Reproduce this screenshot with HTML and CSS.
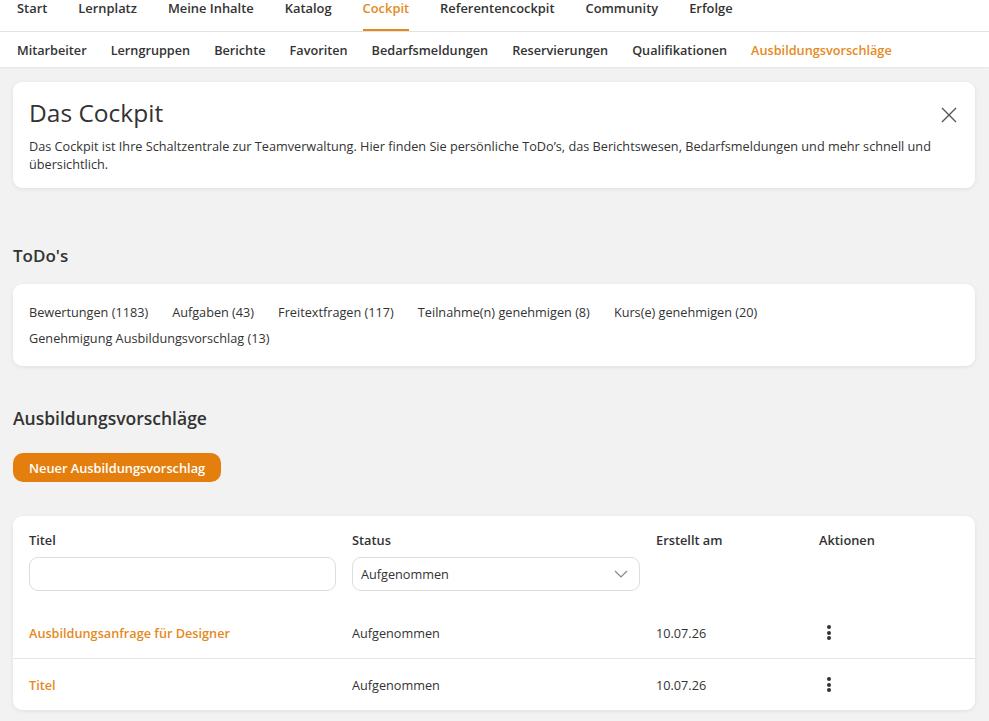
FILE: index.html
```html
<!DOCTYPE html>
<html lang="de">
<head>
  <meta charset="UTF-8">
  <title>Cockpit – Ausbildungsvorschläge</title>
  <link rel="stylesheet" href="styles.css">
</head>
<body>
  <nav class="main-nav">
    <a href="#">Start</a>
    <a href="#">Lernplatz</a>
    <a href="#">Meine Inhalte</a>
    <a href="#">Katalog</a>
    <a href="#" class="active">Cockpit</a>
    <a href="#">Referentencockpit</a>
    <a href="#">Community</a>
    <a href="#">Erfolge</a>
  </nav>
  <nav class="sub-nav">
    <a href="#">Mitarbeiter</a>
    <a href="#">Lerngruppen</a>
    <a href="#">Berichte</a>
    <a href="#">Favoriten</a>
    <a href="#">Bedarfsmeldungen</a>
    <a href="#">Reservierungen</a>
    <a href="#">Qualifikationen</a>
    <a href="#" class="active">Ausbildungsvorschläge</a>
  </nav>

  <main class="content">
    <section class="card intro">
      <div class="intro-head">
        <h1>Das Cockpit</h1>
        <button class="close" aria-label="Schließen">
          <svg width="16" height="16" viewBox="0 0 16 16"><path d="M1 1L15 15M15 1L1 15" stroke="#555" stroke-width="1.4" fill="none"/></svg>
        </button>
      </div>
      <p>Das Cockpit ist Ihre Schaltzentrale zur Teamverwaltung. Hier finden Sie persönliche ToDo’s, das Berichtswesen, Bedarfsmeldungen und mehr schnell und übersichtlich.</p>
    </section>

    <h2 class="todo-title">ToDo's</h2>
    <section class="card todos">
      <a href="#">Bewertungen (1183)</a>
      <a href="#">Aufgaben (43)</a>
      <a href="#">Freitextfragen (117)</a>
      <a href="#">Teilnahme(n) genehmigen (8)</a>
      <a href="#">Kurs(e) genehmigen (20)</a>
      <a href="#">Genehmigung Ausbildungsvorschlag (13)</a>
    </section>

    <h2 class="section-title">Ausbildungsvorschläge</h2>
    <button class="btn-primary">Neuer Ausbildungsvorschlag</button>

    <section class="card table">
      <div class="row head">
        <div class="cell">
          <span class="label">Titel</span>
          <input type="text" class="field">
        </div>
        <div class="cell">
          <span class="label">Status</span>
          <div class="field select">
            <span>Aufgenommen</span>
            <svg width="14" height="8" viewBox="0 0 14 8"><path d="M1 1L7 7L13 1" stroke="#888" stroke-width="1.2" fill="none"/></svg>
          </div>
        </div>
        <div class="cell"><span class="label">Erstellt am</span></div>
        <div class="cell"><span class="label">Aktionen</span></div>
      </div>
      <div class="row item">
        <a href="#" class="title">Ausbildungsanfrage für Designer</a>
        <span>Aufgenommen</span>
        <span>10.07.26</span>
        <span class="kebab"><i></i><i></i><i></i></span>
      </div>
      <div class="row item">
        <a href="#" class="title">Titel</a>
        <span>Aufgenommen</span>
        <span>10.07.26</span>
        <span class="kebab"><i></i><i></i><i></i></span>
      </div>
    </section>
  </main>
</body>
</html>
```

FILE: styles.css
```css
body {
  margin: 0;
  font-family: "Open Sans", "Noto Sans", Arial, sans-serif;
  color: #333;
  background-color: #f2f2f2;
  font-size: 12.7px;
}

a {
  text-decoration: none;
  color: inherit;
}

/* Hauptnavigation */
.main-nav {
  display: flex;
  gap: 31px;
  height: 32px;
  padding: 0 17px;
  background-color: #fff;
  border-bottom: 1px solid #e2e2e2;
  box-sizing: border-box;
}

.main-nav a {
  font-size: 12.9px;
  font-weight: 600;
  color: #333;
  line-height: 14px;
  padding-top: 1px;
  border-bottom: 2px solid transparent;
  height: 31px;
  box-sizing: border-box;
}

.main-nav a.active {
  color: #e5891d;
  border-bottom-color: #e5891d;
}

.sub-nav {
  display: flex;
  gap: 24px;
  height: 35px;
  align-items: center;
  padding: 0 17px;
  background-color: #fff;
  box-shadow: 0 1px 2px rgba(0,0,0,0.05);
}

.sub-nav a {
  font-size: 12.7px;
  font-weight: 600;
  color: #333;
}

.sub-nav a.active {
  color: #e5891d;
}

/* Inhalt */
.content {
  padding: 15px 14px 20px 13px;
}

.card {
  background-color: #fff;
  border-radius: 9px;
  box-shadow: 0 1px 4px rgba(0,0,0,0.08);
}

.intro {
  padding: 14px 16px 15px;
}

.intro-head {
  display: flex;
  justify-content: space-between;
  align-items: center;
}

.intro h1 {
  margin: 0;
  font-size: 24.5px;
  font-weight: 500;
  line-height: 34px;
  color: #333;
}

.close {
  border: none;
  background: none;
  padding: 0;
  margin: 6px 2px 0 0;
  cursor: pointer;
}

.intro p {
  margin: 7px 0 0;
  line-height: 18px;
}

.todo-title, .section-title {
  margin: 0;
  font-size: 17px;
  font-weight: 600;
  color: #333;
}

.todo-title {
  margin-top: 56px;
  margin-bottom: 16px;
  line-height: 24px;
}

.todos {
  display: flex;
  flex-wrap: wrap;
  column-gap: 24px;
  padding: 15px 16px 15px;
  line-height: 26px;
}

.section-title {
  margin-top: 39px;
  font-size: 17.5px;
  line-height: 26px;
}

.btn-primary {
  margin-top: 22px;
  height: 29px;
  padding: 0 16px;
  border: none;
  border-radius: 10px;
  background-color: #e47f0e;
  color: #fff;
  font-family: inherit;
  font-size: 12.8px;
  font-weight: 600;
  cursor: pointer;
  display: block;
}

/* Tabelle */
.table {
  margin-top: 34px;
}

.row {
  display: grid;
  grid-template-columns: 323px 304px 163px 1fr;
  padding: 0 16px;
}

.row.head {
  padding-top: 15px;
  padding-bottom: 16px;
}

.cell {
  display: flex;
  flex-direction: column;
}

.label {
  font-size: 12.8px;
  font-weight: 600;
  line-height: 18px;
  margin-bottom: 8px;
}

.field {
  box-sizing: border-box;
  height: 34px;
  margin-right: 16px;
  border: 1px solid #ddd;
  border-radius: 9px;
  background-color: #fff;
  font-family: inherit;
  font-size: 12.7px;
}

.select {
  display: flex;
  align-items: center;
  justify-content: space-between;
  padding: 0 11px 0 8px;
}

.row.item {
  height: 51px;
  align-items: center;
}

.row.item + .row.item {
  border-top: 1px solid #e4e4e4;
}

.title {
  color: #e5891d;
  font-weight: 600;
}

.kebab {
  display: flex;
  flex-direction: column;
  gap: 1.5px;
  width: 4px;
  margin-left: 8px;
}

.kebab i {
  display: block;
  width: 4px;
  height: 4px;
  border-radius: 50%;
  background-color: #333;
}
```
